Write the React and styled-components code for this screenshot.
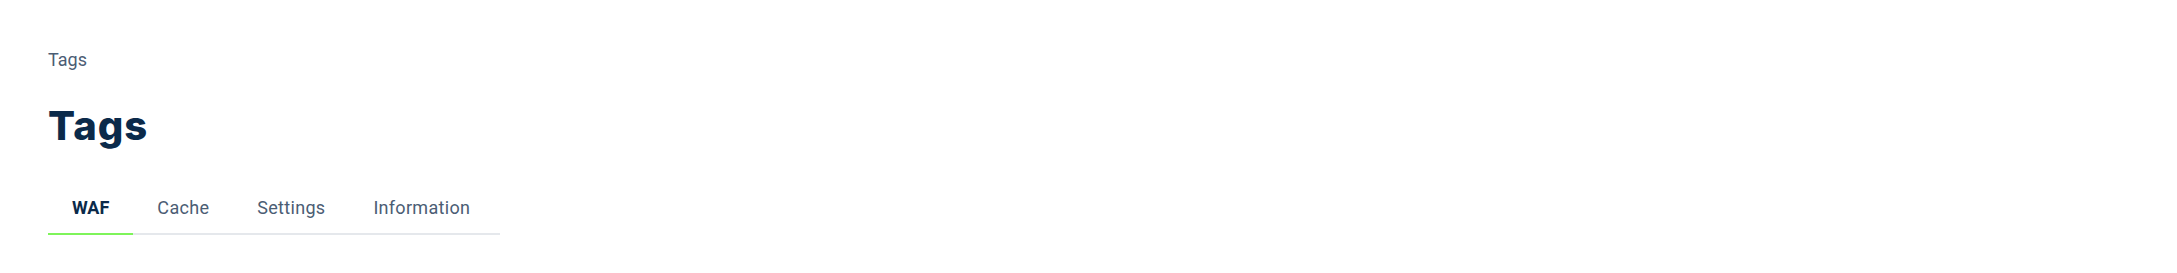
import React from "react";
import styled, { createGlobalStyle } from "styled-components";

const Global = createGlobalStyle`
  body {
    margin: 0;
    background: #ffffff;
    font-family: Roboto, "Liberation Sans", sans-serif;
  }
`;

const Page = styled.div`
  padding: 48px 48px 0 48px;
  min-height: 273px;
  box-sizing: border-box;
`;

const Breadcrumb = styled.div`
  font-size: 18px;
  line-height: 24px;
  color: #4b5d74;
`;

const Title = styled.h1`
  margin: 30px 0 0 0;
  font-family: Inter, "Liberation Sans", sans-serif;
  font-weight: 800;
  font-size: 40px;
  line-height: 48px;
  letter-spacing: 1px;
  color: #0b2a4a;
`;

const TabBar = styled.div`
  display: flex;
  width: 452px;
  margin-top: 40px;
  border-bottom: 2px solid #e5e8ec;
`;

const Tab = styled.button`
  border: none;
  background: none;
  padding: 0 24px 8px 24px;
  height: 45px;
  margin-bottom: -2px;
  font-family: Roboto, "Liberation Sans", sans-serif;
  font-size: 18px;
  letter-spacing: ${(p) => (p.active ? "0" : "0.3px")};
  cursor: pointer;
  color: ${(p) => (p.active ? "#0b2a4a" : "#4b5d74")};
  font-weight: ${(p) => (p.active ? 700 : 400)};
  border-bottom: 2px solid ${(p) => (p.active ? "#7ef45a" : "transparent")};
`;

const tabs = ["WAF", "Cache", "Settings", "Information"];

const App = () => (
  <Page>
    <Global />
    <Breadcrumb>Tags</Breadcrumb>
    <Title>Tags</Title>
    <TabBar>
      {tabs.map((t, i) => (
        <Tab key={t} active={i === 0}>
          {t}
        </Tab>
      ))}
    </TabBar>
  </Page>
);

export default App;
